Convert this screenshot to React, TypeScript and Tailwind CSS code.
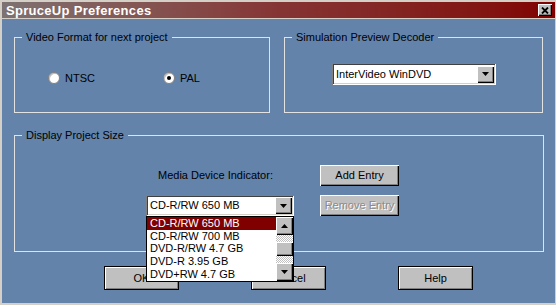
import React from 'react';

const FONT = { fontFamily: '"Liberation Sans", Arial, sans-serif' };

function Arrow({ up = false }: { up?: boolean }) {
  return (
    <svg width="7" height="4" viewBox="0 0 7 4" className={up ? 'rotate-180' : ''}>
      <path d="M0 0h7L3.5 4z" fill="#000" />
    </svg>
  );
}

function Raised({ className = '', children }: { className?: string; children?: React.ReactNode }) {
  return (
    <div
      className={`flex items-center justify-center bg-[#c0c0c0] shadow-[inset_1px_1px_0_#fff,inset_-1px_-1px_0_#000,inset_-2px_-2px_0_#808080] ${className}`}
    >
      {children}
    </div>
  );
}

function Combo({ value, width }: { value: string; width: string }) {
  return (
    <div
      className={`flex h-[21px] items-center bg-white pl-[4px] pr-[2px] shadow-[inset_1px_1px_0_#808080,inset_-1px_-1px_0_#fff,inset_2px_2px_0_#404040,inset_-2px_-2px_0_#d4d0c8] ${width}`}
    >
      <span className="flex-1 text-[11px] leading-none text-black">{value}</span>
      <Raised className="h-[17px] w-[17px]">
        <Arrow />
      </Raised>
    </div>
  );
}

function Radio({ label, checked = false, className = '' }: { label: string; checked?: boolean; className?: string }) {
  return (
    <div className={`flex items-center gap-[5px] ${className}`}>
      <span className="flex h-[12px] w-[12px] items-center justify-center rounded-full border border-[#808080] bg-white shadow-[inset_1px_1px_0_#c0c0c0]">
        {checked && <span className="h-[4px] w-[4px] rounded-full bg-black" />}
      </span>
      <span className="text-[11px] leading-none text-black">{label}</span>
    </div>
  );
}

function Group({ title, className = '', children }: { title: string; className?: string; children?: React.ReactNode }) {
  return (
    <fieldset className={`min-w-0 shrink-0 border border-[#e2e2e2] ${className}`}>
      <legend className="ml-[7px] px-[4px] text-[11px] leading-[13px] text-black">{title}</legend>
      {children}
    </fieldset>
  );
}

function DialogButton({ label }: { label: string }) {
  return (
    <button className="h-[24px] w-[75px] border border-black bg-[#c0c0c0] text-[11px] text-black shadow-[inset_1px_1px_0_#fff,inset_-1px_-1px_0_#808080]">
      {label}
    </button>
  );
}

const MEDIA = ['CD-R/RW 650 MB', 'CD-R/RW 700 MB', 'DVD-R/RW 4.7 GB', 'DVD-R 3.95 GB', 'DVD+RW 4.7 GB'];

export default function App() {
  return (
    <div
      style={FONT}
      className="flex h-[305px] w-[556px] flex-col border-t-2 border-r border-b-2 border-l-2 border-[#d4d0c8] bg-[#6383ab]"
    >
      <div className="flex h-[17px] items-center justify-between border-b border-[#d4d0c8] bg-gradient-to-r from-[#7d7272] via-[#853434] to-[#800000] pr-[3px] pl-[4px]">
        <span className="text-[13px] font-bold leading-none tracking-[0.3px] text-white">SpruceUp Preferences</span>
        <Raised className="h-[12px] w-[14px]">
          <svg width="8" height="7" viewBox="0 0 8 7">
            <path d="M1 0.5l6 6M7 0.5l-6 6" stroke="#000" strokeWidth="1.8" />
          </svg>
        </Raised>
      </div>

      <div className="flex flex-col px-[12px] pt-[12px]">
        <div className="flex gap-[14px]">
          <Group title="Video Format for next project" className="h-[82px] w-[256px]">
            <div className="mt-[28px] flex pl-[33px]">
              <Radio label="NTSC" className="w-[115px]" />
              <Radio label="PAL" checked />
            </div>
          </Group>
          <Group title="Simulation Preview Decoder" className="h-[82px] w-[259px]">
            <div className="mt-[19px] pl-[47px]">
              <Combo value="InterVideo WinDVD" width="w-[164px] h-[22px]" />
            </div>
          </Group>
        </div>

        <Group title="Display Project Size" className="mt-[16px] h-[123px] w-[530px]">
          <div className="mt-[23px] flex gap-[26px] pl-[131px]">
            <div className="flex w-[148px] flex-col gap-[9px]">
              <div className="flex h-[21px] items-center pl-[12px] text-[11px] text-black">Media Device Indicator:</div>
              <div className="relative z-10">
                <Combo value="CD-R/RW 650 MB" width="w-[148px] h-[20px]" />
                <div className="absolute top-full left-0 flex h-[66px] w-[148px] border border-black bg-white">
                  <div className="flex flex-1 flex-col">
                    {MEDIA.map((m, i) => (
                      <div
                        key={m}
                        className={`flex h-[13px] items-center pl-[3px] text-[11px] leading-none ${
                          i === 0 ? 'bg-[#800000] text-white' : 'text-black'
                        }`}
                      >
                        {m}
                      </div>
                    ))}
                  </div>
                  <div className="flex w-[17px] flex-col bg-[repeating-conic-gradient(#c0c0c0_0_25%,#fff_0_50%)] bg-[length:2px_2px]">
                    <Raised className="h-[18px] w-[17px]">
                      <Arrow up />
                    </Raised>
                    <div className="flex-1" />
                    <Raised className="h-[14px] w-[17px]" />
                    <div className="flex-1" />
                    <Raised className="h-[18px] w-[17px]">
                      <Arrow />
                    </Raised>
                  </div>
                </div>
              </div>
            </div>
            <div className="flex flex-col gap-[9px]">
              <Raised className="h-[21px] w-[79px] text-[11px] text-black">Add Entry</Raised>
              <Raised className="h-[21px] w-[79px] text-[11px] text-[#8a8a8a] [text-shadow:1px_1px_0_#fff]">
                Remove Entry
              </Raised>
            </div>
          </div>
        </Group>

        <div className="mt-[14px] flex gap-[72px] pl-[90px]">
          <DialogButton label="OK" />
          <DialogButton label="Cancel" />
          <DialogButton label="Help" />
        </div>
      </div>
    </div>
  );
}
